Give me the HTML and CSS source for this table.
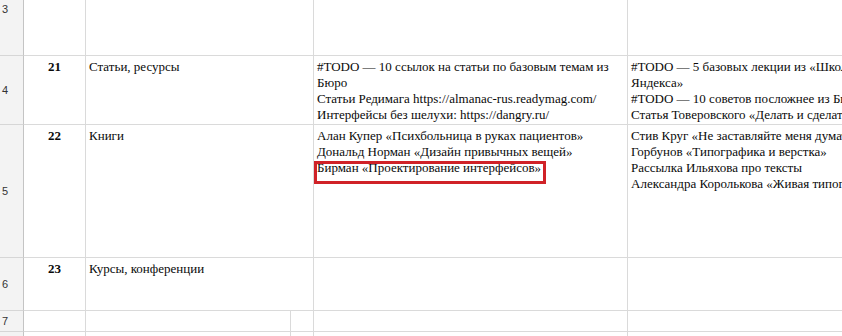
FILE: index.html
```html
<!DOCTYPE html>
<html lang="ru">
<head>
<meta charset="utf-8">
<link rel="stylesheet" href="styles.css">
</head>
<body>
<div class="sheet">
  <div class="rh r3">3</div>
  <div class="cell num"></div>
  <div class="cell span2"></div>
  <div class="cell"></div>
  <div class="cell"></div>

  <div class="rh r4">4</div>
  <div class="cell num">21</div>
  <div class="cell span2">Статьи, ресурсы</div>
  <div class="cell">#TODO — 10 ссылок на статьи по базовым темам из Бюро<br>Статьи Редимага https://almanac-rus.readymag.com/<br>Интерфейсы без шелухи: https://dangry.ru/</div>
  <div class="cell">#TODO — 5 базовых лекции из «Школы дизайна Яндекса»<br>#TODO — 10 советов посложнее из Бюро<br>Статья Товеровского «Делать и сделать»</div>

  <div class="rh r5">5</div>
  <div class="cell num">22</div>
  <div class="cell span2">Книги</div>
  <div class="cell marked">Алан Купер «Психбольница в руках пациентов»<br>Дональд Норман «Дизайн привычных вещей»<br>Бирман «Проектирование интерфейсов»<div class="highlight"></div></div>
  <div class="cell">Стив Круг «Не заставляйте меня думать»<br>Горбунов «Типографика и верстка»<br>Рассылка Ильяхова про тексты<br>Александра Королькова «Живая типографика»</div>

  <div class="rh r6">6</div>
  <div class="cell num">23</div>
  <div class="cell span2">Курсы, конференции</div>
  <div class="cell"></div>
  <div class="cell"></div>

  <div class="rh r7">7</div>
  <div class="cell num"></div>
  <div class="cell"></div>
  <div class="cell"></div>
  <div class="cell"></div>
  <div class="cell"></div>

  <div class="rh r8"></div>
  <div class="cell num"></div>
  <div class="cell"></div>
  <div class="cell"></div>
  <div class="cell"></div>
  <div class="cell"></div>
</div>
</body>
</html>
```

FILE: styles.css
```css
html, body {
  margin: 0;
  padding: 0;
  background: #ffffff;
  overflow: hidden;
}

.sheet {
  display: grid;
  grid-template-columns: 24px 62px 205px 23px 314px 320px;
  grid-template-rows: 56px 69px 133px 53px 21px 20px;
  width: 948px;
  font-family: "Liberation Serif", "Times New Roman", serif;
  font-size: 13px;
  line-height: 16px;
  color: #0a0a0a;
}

.rh {
  background: #f3f3f3;
  border-right: 1px solid #c4c4c4;
  border-bottom: 1px solid #d6d6d6;
  font-family: "Liberation Sans", Arial, sans-serif;
  font-size: 11px;
  color: #333333;
  display: flex;
  align-items: center;
  padding-left: 2px;
}

.r3 {
  align-items: flex-start;
  padding-top: 1px;
}

.cell {
  border-right: 1px solid #dadada;
  border-bottom: 1px solid #dadada;
  padding: 3px 3px 0 3px;
  overflow: hidden;
  white-space: normal;
}

.span2 {
  grid-column: span 2;
}

.num {
  text-align: center;
  font-weight: bold;
  padding-left: 0;
  padding-right: 0;
}

.marked {
  position: relative;
  overflow: visible;
}

.highlight {
  position: absolute;
  left: 0;
  top: 36px;
  width: 232px;
  height: 23px;
  box-sizing: border-box;
  border: 3px solid #d02228;
}
```
